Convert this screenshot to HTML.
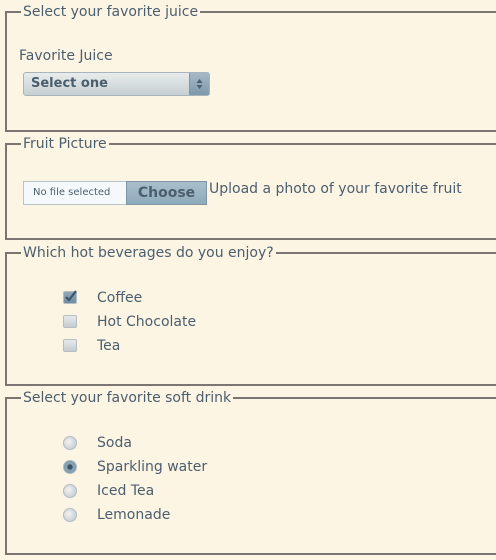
<!DOCTYPE html>
<html><head><style>
html,body{margin:0;padding:0;background:#fdf5e4;width:496px;height:560px;overflow:hidden;position:relative;font-family:"DejaVu Sans","Liberation Sans",sans-serif;font-size:14px;color:#4b5e6e}
.fs{position:absolute;left:5px;width:500px;border:2px solid #7a7570;border-right:none;box-sizing:border-box}
.lg{position:absolute;left:14px;top:-11px;background:#fdf5e4;padding:0 2px;line-height:20px;white-space:nowrap;font-size:14px}
.a{position:absolute;white-space:nowrap;line-height:17px;font-size:14px}
.sel{position:absolute;left:23px;top:72px;width:187px;height:24px;border:1px solid #a8b4bc;border-radius:3px;box-sizing:border-box;background:linear-gradient(#e8ecec,#c6cfd2);font-weight:bold;font-size:13px;line-height:22px;padding-left:7px;color:#4b5e6e}
.sel .ar{position:absolute;right:0;top:0;width:19px;height:22px;background:linear-gradient(#a6b9c6,#7e99ac);border-left:1px solid #7f95a3}
.file{position:absolute;left:23px;top:181px;width:183px;height:24px;border:1px solid #b8c4cc;box-sizing:border-box;background:#f6f9fb;font-size:10px;line-height:22px}
.file .ch{position:absolute;left:102px;top:-1px;width:81px;height:24px;background:linear-gradient(#a9bfcb,#8eaabb);border:1px solid #7f95a3;box-sizing:border-box;font-weight:bold;font-size:14px;text-align:center;line-height:22px}
.cb{position:absolute;left:63px;width:14px;height:13px;border-radius:2px;background:linear-gradient(#e8eaea,#c4cbcf);border:1px solid #b4bec4;box-sizing:border-box}
.rd{position:absolute;left:63px;width:14px;height:14px;border-radius:50%;background:radial-gradient(circle at 40% 40%,#f2f2f2,#bcc5ca);border:1px solid #b0bbc2;box-sizing:border-box}
</style></head><body>
<div class="fs" style="top:11px;height:121px"><div class="lg">Select your favorite juice</div></div>
<div class="a" style="left:19px;top:48px">Favorite Juice</div>
<div class="sel">Select one<div class="ar"><svg width="19" height="22"><path d="M9.5 6 L6.5 10 H12.5Z M9.5 16 L6.5 12 H12.5Z" fill="#4b5e6e"/></svg></div></div>

<div class="fs" style="top:143px;height:97px"><div class="lg">Fruit Picture</div></div>
<div class="file"><span style="padding-left:9px">No file selected</span><div class="ch">Choose</div></div>
<div class="a" style="left:209px;top:181px">Upload a photo of your favorite fruit</div>

<div class="fs" style="top:252px;height:134px"><div class="lg">Which hot beverages do you enjoy?</div></div>
<div class="cb" style="top:291px;background:linear-gradient(#8fa9bb,#6f8ca0)"><svg width="14" height="13" style="position:absolute;left:0;top:-3px"><path d="M2 8 L5 11 L12 2" stroke="#3f5566" stroke-width="2.2" fill="none"/></svg></div>
<div class="a" style="left:97px;top:290px">Coffee</div>
<div class="cb" style="top:315px"></div>
<div class="a" style="left:97px;top:314px">Hot Chocolate</div>
<div class="cb" style="top:339px"></div>
<div class="a" style="left:97px;top:338px">Tea</div>

<div class="fs" style="top:397px;height:158px"><div class="lg">Select your favorite soft drink</div></div>
<div class="rd" style="top:436px"></div>
<div class="a" style="left:97px;top:435px">Soda</div>
<div class="rd" style="top:460px;background:radial-gradient(circle,#3f5566 0 2.5px,#8ea8ba 3px,#6f8ca0)"></div>
<div class="a" style="left:97px;top:459px">Sparkling water</div>
<div class="rd" style="top:484px"></div>
<div class="a" style="left:97px;top:483px">Iced Tea</div>
<div class="rd" style="top:508px"></div>
<div class="a" style="left:97px;top:507px">Lemonade</div>
</body></html>
